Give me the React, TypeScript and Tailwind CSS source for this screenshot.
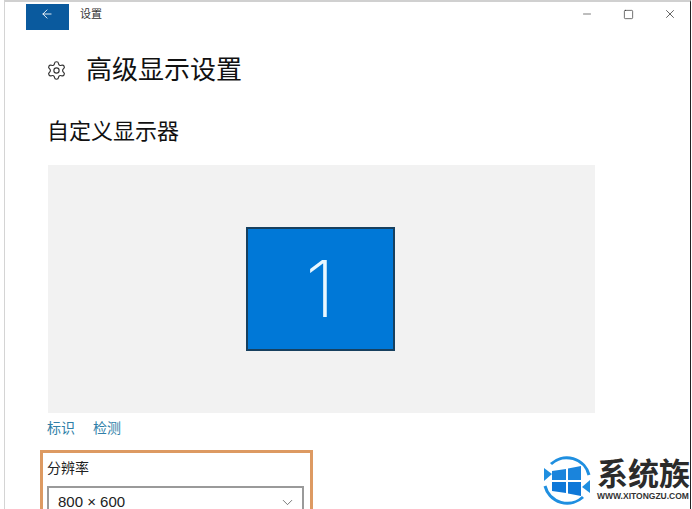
import { ArrowLeft, ChevronDown, Minus, Settings, Square, X } from "lucide-react";

const cjk = "font-['Liberation_Sans','Noto_Sans_CJK_SC',sans-serif]";

function WatermarkLogo() {
  return (
    <svg width="48" height="51" viewBox="0 0 48 51">
      <path d="M8 9 A23 23 0 0 1 46 20" fill="none" stroke="#1f8fe0" strokeWidth="3" />
      <path d="M40 42 A23 23 0 0 1 2 31" fill="none" stroke="#1f8fe0" strokeWidth="3" />
      <path d="M1 13 L9 19 L1 26 Z" fill="#1f8fe0" />
      <path d="M47 38 L39 32 L47 25 Z" fill="#1f8fe0" />
      <path d="M9 16 L23 14 V25 H9 Z" fill="#1a84dc" />
      <path d="M25 13.500 L38 11 V25 H25 Z" fill="#1a84dc" />
      <path d="M9 27 H23 V38 L9 36 Z" fill="#0f78d8" />
      <path d="M25 27 H38 V41 L25 38.500 Z" fill="#0f78d8" />
    </svg>
  );
}

export default function App() {
  return (
    <div className={`relative h-[509px] w-[692px] overflow-hidden bg-white ${cjk}`}>
      <div className="ml-1 mr-[1px] h-[509px] border-x border-t-2 border-l-[#d4d4d4] border-r-[#222] border-t-[#d0d0d0] pl-[21px]">
        {/* title bar */}
        <div className="flex h-7 items-start">
          <div className="mt-0.5 flex h-[26px] w-[43px] items-center justify-center bg-[#0a5a9e]">
            <ArrowLeft size={14} strokeWidth={1.5} className="-mt-[6px] -ml-[2px] text-white" />
          </div>
          <span className="mt-1 ml-[11px] text-[11px] leading-4 text-[#333]">设置</span>
          <div className="mt-[5px] ml-auto flex items-center pr-[13px] text-[#222]">
            <Minus size={12} strokeWidth={1.2} />
            <Square size={11} strokeWidth={1.4} className="ml-[30px]" />
            <X size={14} strokeWidth={1.2} className="ml-[29px]" />
          </div>
        </div>

        <div className="ml-[22px]">
          <div className="mt-5 flex h-10 items-center">
            <Settings size={21} strokeWidth={1.3} className="-ml-[2px] text-[#333]" />
            <h1 className="ml-[19px] text-[26px] leading-10 font-normal text-[#111]">高级显示设置</h1>
          </div>

          <h2 className="mt-[26px] -ml-px text-[22px] leading-8 font-normal text-[#111]">自定义显示器</h2>

          <div className="mt-[17px] flex h-[248px] w-[547px] items-center justify-center bg-[#f2f2f2]">
            <div className="mt-[-1px] -ml-[3px] flex h-[124px] w-[149px] items-center justify-center border-2 border-[#17405f] bg-[#0078d7]">
              <span className="font-['Inter'] text-[78px] leading-none font-extralight text-[#e8f7ff]">1</span>
            </div>
          </div>

          <div className="mt-[5px] -ml-px flex gap-[18px] text-sm leading-5 text-[#2f7fa8]">
            <span>标识</span>
            <span>检测</span>
          </div>
        </div>

        {/* highlighted resolution box */}
        <div className="mt-3 ml-[14px] h-[70px] w-[273px] border-[3px] border-[#dd9a62] pt-[5px] pl-1">
          <div className="text-sm leading-5 text-[#222]">分辨率</div>
          <div className="mt-2 flex h-9 w-[257px] items-start justify-between border-2 border-[#9a9a9a] pt-1 pr-[6px] pl-[9px]">
            <span className="text-[15px] leading-5 text-[#222]">800 × 600</span>
            <ChevronDown size={17} strokeWidth={1} className="mt-[2px] text-[#444]" />
          </div>
        </div>
      </div>

      {/* site watermark */}
      <div className="absolute top-[455px] left-[543px] flex items-start">
        <WatermarkLogo />
        <div className="ml-[6px] w-[95px] shrink-0 pt-[3px]">
          <div className="text-[31px] leading-[33px] font-bold whitespace-nowrap text-[#2b2b2b]">系统族</div>
          <div className="text-[8.500px] leading-[11px] font-bold whitespace-nowrap text-[#333]">WWW.XITONGZU.COM</div>
        </div>
      </div>
    </div>
  );
}
